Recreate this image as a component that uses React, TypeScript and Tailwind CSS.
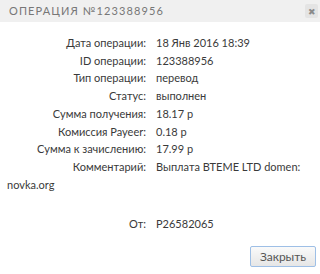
const rows: [string, string][] = [
  ['Дата операции:', '18 Янв 2016 18:39'],
  ['ID операции:', '123388956'],
  ['Тип операции:', 'перевод'],
  ['Статус:', 'выполнен'],
  ['Сумма получения:', '18.17 р'],
  ['Комиссия Payeer:', '0.18 р'],
  ['Сумма к зачислению:', '17.99 р'],
  ['Комментарий:', 'Выплата BTEME LTD domen: novka.org'],
]

function Row({ label, value }: { label: string; value: string }) {
  return (
    <p className="leading-[17.7px]">
      <span className="inline-block w-[139px] mr-[10px] text-right">{label}</span>
      {value}
    </p>
  )
}

export default function App() {
  return (
    <div
      className="w-[320px] h-[274px] bg-white text-[#3a3a3a] text-[11px] overflow-hidden"
      style={{ fontFamily: 'Lato, "Open Sans", sans-serif' }}
    >
      {/* Header */}
      <div className="h-[22px] bg-[#f0f0f0] flex items-center justify-between pl-[9px] pr-[2px]">
        <span className="text-[11px] tracking-[1.1px] text-[#777]">ОПЕРАЦИЯ №123388956</span>
        <button className="w-[13px] h-[14px] flex items-center justify-center bg-[#e4e4e4] rounded-[2px] text-[#8a8a8a] text-[9px] leading-none">
          ✖
        </button>
      </div>

      {/* Body */}
      <div className="pl-[7px] pr-[8px] pt-[12px]">
        {rows.map(([l, v]) => (
          <Row key={l} label={l} value={v} />
        ))}
        <div className="h-[22px]" />
        <Row label="От:" value="P26582065" />
      </div>

      {/* Footer */}
      <div className="flex justify-end pr-[4px] pt-[13px]">
        <button className="w-[66px] h-[21px] border border-[#9ebfe6] rounded-[2px] bg-gradient-to-b from-[#fafafa] to-[#e6e6e6] text-[12px] text-[#555]">
          Закрыть
        </button>
      </div>
    </div>
  )
}
